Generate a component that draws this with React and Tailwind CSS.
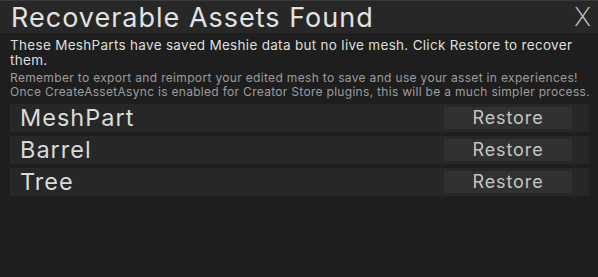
import React from "react";

const assets = ["MeshPart", "Barrel", "Tree"];

const App = () => {
  return (
    <div className="w-[598px] h-[277px] bg-[#1e1e1e] overflow-hidden font-['Inter',sans-serif] text-[#dcdcdc]">
      {/* Title bar */}
      <div className="h-[33px] bg-[#272727] border-t border-[#3a3a3a] flex items-center justify-between pl-[11px] pr-[7px]">
        <h1 className="text-[27px] leading-none tracking-[1px] text-[#e2e2e2]">Recoverable Assets Found</h1>
        <button className="text-[26px] leading-none font-extralight text-[#cfcfcf]">X</button>
      </div>

      {/* Info text */}
      <div className="px-[10px] pt-[5px]">
        <p className="text-[13.5px] leading-[15px] tracking-[0.3px] text-[#dedede] w-[578px]">
          These MeshParts have saved Meshie data but no live mesh. Click Restore to recover them.
        </p>
        <p className="mt-[3px] text-[12px] leading-[14px] tracking-[0.33px] text-[#9c9c9c] whitespace-nowrap">
          Remember to export and reimport your edited mesh to save and use your asset in experiences!
        </p>
        <p className="text-[12px] leading-[14px] tracking-[0.3px] text-[#9c9c9c] whitespace-nowrap">
          Once CreateAssetAsync is enabled for Creator Store plugins, this will be a much simpler process.
        </p>
      </div>

      {/* Asset list */}
      <div className="mt-[5px] px-[10px] flex flex-col gap-[4px]">
        {assets.map((name) => (
          <div
            key={name}
            className="h-[28px] w-[579px] bg-[#272727] flex items-center justify-between pl-[10px] pr-[17px]"
          >
            <span className="text-[23.5px] leading-none tracking-[1px] text-[#dadada]">{name}</span>
            <button className="w-[128px] h-[22px] bg-[#313131] text-[18px] leading-none tracking-[0.9px] text-[#c4c4c4]">
              Restore
            </button>
          </div>
        ))}
      </div>
    </div>
  );
};

export default App;
